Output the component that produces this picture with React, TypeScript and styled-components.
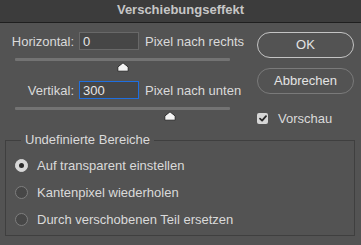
import React from "react";
import styled, { createGlobalStyle } from "styled-components";

const Global = createGlobalStyle`
  html, body { margin: 0; padding: 0; background: #535353; }
  body { font-family: "Liberation Sans", Arial, sans-serif; font-size: 13px; color: #dadada; }
  * { box-sizing: border-box; }
`;

const Dialog = styled.div`
  width: 361px;
  height: 245px;
  background: #535353;
  overflow: hidden;
`;

const TitleBar = styled.div`
  height: 23px;
  background: #3c3c3c;
  border-bottom: 1px solid #1f1f1f;
  display: flex;
  align-items: center;
  justify-content: center;
  padding-bottom: 3px;
  font-weight: 700;
  font-size: 13px;
  color: #c6c6c6;
`;

const Top = styled.div`
  display: flex;
  align-items: flex-start;
  padding: 9px 0 0 0;
  height: 109px;
`;

const LeftCol = styled.div`
  width: 245px;
  display: flex;
  flex-direction: column;
`;

const RightCol = styled.div`
  margin-left: 12px;
  width: 97px;
  display: flex;
  flex-direction: column;
`;

const FieldRow = styled.div<{ $first?: boolean }>`
  display: flex;
  align-items: center;
  height: 18px;
  margin-top: ${(p) => (p.$first ? "0" : "9px")};
`;

const Label = styled.span`
  width: 74px;
  text-align: right;
  color: #dadada;
`;

const Input = styled.div<{ $focused?: boolean }>`
  margin-left: 5px;
  width: 60px;
  height: 18px;
  background: #464646;
  border: 1px solid ${(p) => (p.$focused ? "#1f6fe0" : "#686868")};
  padding-left: 3px;
  display: flex;
  align-items: center;
  color: #e6e6e6;
`;

const Unit = styled.span`
  margin-left: 6px;
  color: #dadada;
  white-space: nowrap;
`;

const Slider = styled.div`
  position: relative;
  margin: 8px 0 0 15px;
  width: 215px;
  height: 14px;
`;

const Track = styled.div`
  height: 3px;
  background: #737373;
  border-radius: 1px;
`;

const Thumb = styled.svg`
  position: absolute;
  top: 4px;
  width: 12px;
  height: 10px;
  margin-left: -6px;
`;

const Button = styled.div<{ $default?: boolean }>`
  height: 26px;
  border-radius: 13px;
  border: 1px solid ${(p) => (p.$default ? "#c4c4c4" : "#7a7a7a")};
  display: flex;
  align-items: center;
  justify-content: center;
  color: #e4e4e4;
  margin-bottom: 10px;
  padding-bottom: 1px;
`;

const CheckRow = styled.div`
  display: flex;
  align-items: center;
  margin-top: 6px;
  height: 16px;
`;

const CheckBox = styled.div`
  width: 11px;
  height: 11px;
  border-radius: 2px;
  background: #d6d6d6;
  display: flex;
  align-items: center;
  justify-content: center;
`;

const CheckLabel = styled.span`
  margin-left: 10px;
  color: #dadada;
`;

const Group = styled.fieldset`
  margin: 0 6px 0 5px;
  border: 1px solid #3f3f3f;
  padding: 7px 0 6px 9px;
  display: flex;
  flex-direction: column;
  gap: 7px;
`;

const Legend = styled.legend`
  margin-left: 6px;
  padding: 0 4px;
  line-height: 16px;
  color: #dadada;
`;

const RadioRow = styled.div`
  display: flex;
  align-items: center;
  height: 20px;
`;

const Radio = styled.div<{ $on?: boolean }>`
  width: 13px;
  height: 13px;
  border-radius: 50%;
  background: ${(p) => (p.$on ? "#d8d8d8" : "#474747")};
  border: 1px solid ${(p) => (p.$on ? "#d8d8d8" : "#7e7e7e")};
  display: flex;
  align-items: center;
  justify-content: center;
  &::after {
    content: "";
    display: ${(p) => (p.$on ? "block" : "none")};
    width: 5px;
    height: 5px;
    border-radius: 50%;
    background: #2a2a2a;
  }
`;

const RadioLabel = styled.span`
  margin-left: 9px;
  color: #dadada;
`;

function SliderBar({ pos }: { pos: number }) {
  return (
    <Slider>
      <Track />
      <Thumb viewBox="0 0 12 10" style={{ left: `${pos * 100}%` }}>
        <path
          d="M6 0.8 L11.2 5 L11.2 9.2 L0.8 9.2 L0.8 5 Z"
          fill="#f4f4f4"
          stroke="#2d2d2d"
          strokeWidth="1"
          strokeLinejoin="round"
        />
      </Thumb>
    </Slider>
  );
}

export default function App() {
  return (
    <Dialog>
      <Global />
      <TitleBar>Verschiebungseffekt</TitleBar>
      <Top>
        <LeftCol>
          <FieldRow $first>
            <Label>Horizontal:</Label>
            <Input>0</Input>
            <Unit>Pixel nach rechts</Unit>
          </FieldRow>
          <SliderBar pos={0.5} />
          <FieldRow>
            <Label>Vertikal:</Label>
            <Input $focused>300</Input>
            <Unit>Pixel nach unten</Unit>
          </FieldRow>
          <SliderBar pos={0.722} />
        </LeftCol>
        <RightCol>
          <Button $default>OK</Button>
          <Button>Abbrechen</Button>
          <CheckRow>
            <CheckBox>
              <svg width="8" height="7" viewBox="0 0 8 7">
                <path d="M1 3.6 L3.1 5.6 L7 1.2" fill="none" stroke="#2b2b2b" strokeWidth="1.8" strokeLinecap="round" strokeLinejoin="round" />
              </svg>
            </CheckBox>
            <CheckLabel>Vorschau</CheckLabel>
          </CheckRow>
        </RightCol>
      </Top>
      <Group>
        <Legend>Undefinierte Bereiche</Legend>
        <RadioRow>
          <Radio $on />
          <RadioLabel>Auf transparent einstellen</RadioLabel>
        </RadioRow>
        <RadioRow>
          <Radio />
          <RadioLabel>Kantenpixel wiederholen</RadioLabel>
        </RadioRow>
        <RadioRow>
          <Radio />
          <RadioLabel>Durch verschobenen Teil ersetzen</RadioLabel>
        </RadioRow>
      </Group>
    </Dialog>
  );
}
